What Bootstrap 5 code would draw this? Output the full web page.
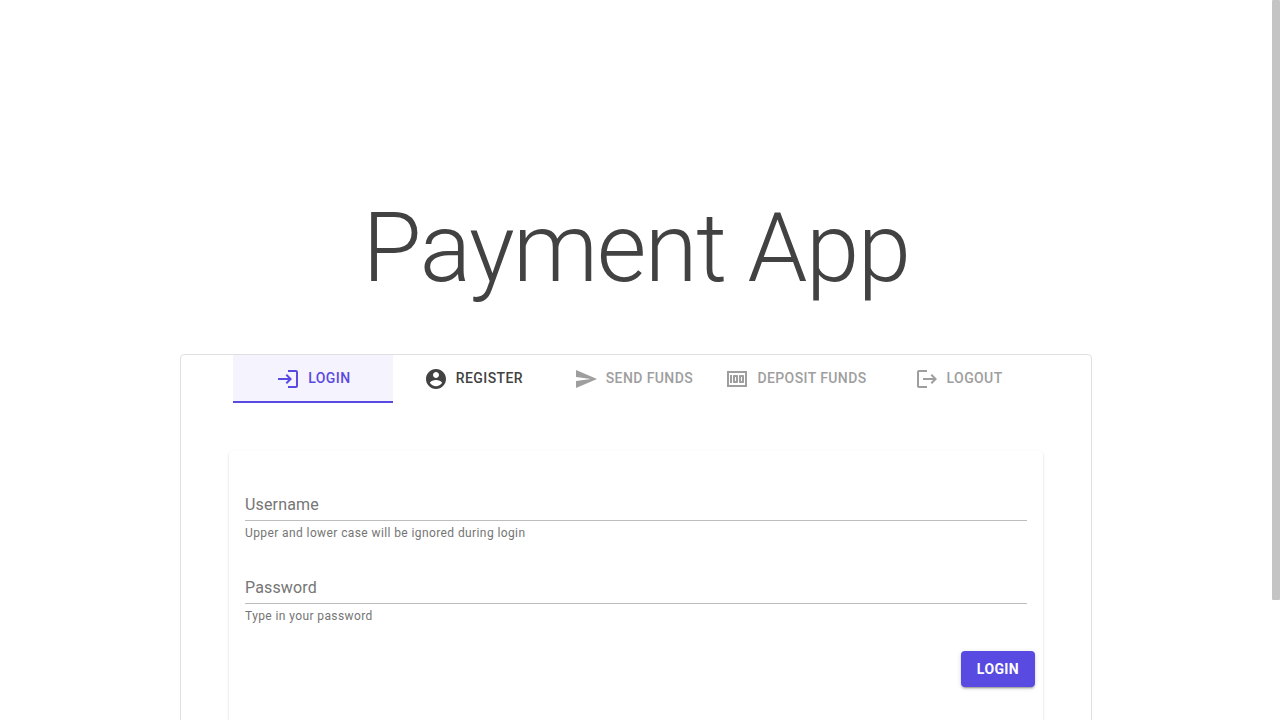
<!DOCTYPE html>
<html lang="en">
<head>
<meta charset="utf-8">
<meta name="viewport" content="width=device-width, initial-scale=1">
<title>Payment App</title>
<link href="https://cdn.jsdelivr.net/npm/bootstrap@5.3.0/dist/css/bootstrap.min.css" rel="stylesheet">
<style>
html, body { height: 100%; }
body { font-family: Roboto, sans-serif; color: #424242; overflow: hidden; }
/* thin scrollbar column at the right of the page */
.rail { width: 8px; }
.rail-thumb { height: 83.3333%; background: #c4c4c4; border-radius: 1px; }
.page-body { min-width: 0; overflow: hidden; padding-top: 192px; }
.shell { max-width: 912px; }
h1 { font-size: 96px; font-weight: 300; line-height: 112px; letter-spacing: -.01562em; margin-bottom: 50px; }
.panel { border: 1px solid #e0e0e0; border-radius: 4px; }
.tab-btn { min-width: 160px; height: 48px; border: 0; border-bottom: 2px solid transparent; background: none; padding: 0 12px; font-size: 14px; font-weight: 500; line-height: 24px; letter-spacing: .02857em; color: #424242; }
.tab-btn svg { width: 24px; height: 24px; margin-top: 2px; fill: currentColor; }
.tab-btn:disabled { color: #9e9e9e; }
.tab-btn.active { color: #594ae2; background: #f5f3fd; border-bottom-color: #594ae2; }
.form-card { border-radius: 4px; background: #fff; box-shadow: 0 2px 1px -1px rgba(0,0,0,.2), 0 1px 1px 0 rgba(0,0,0,.14), 0 1px 3px 0 rgba(0,0,0,.12); min-height: 320px; }
.fields { padding: 38px 16px 27px; }
.field { margin-bottom: 31px; }
.field label { top: 4px; left: 0; font-size: 16px; line-height: 24px; letter-spacing: .00938em; color: #757575; pointer-events: none; }
.field input { height: 32px; border: 0; border-bottom: 1px solid #bdbdbd; background: none; outline: 0; font-size: 16px; padding: 0; }
.field input:focus + label, .field input:not(:placeholder-shown) + label { top: -16px; font-size: 12px; }
.field .hint { margin-top: 4px; font-size: 12px; line-height: 16px; letter-spacing: .03333em; color: #757575; }
.btn-login { width: 74px; height: 36px; border: 0; border-radius: 4px; padding: 0; background: #594ae2; color: #fff; font-size: 14px; font-weight: 700; letter-spacing: .02857em; box-shadow: 0 3px 1px -2px rgba(0,0,0,.2), 0 2px 2px 0 rgba(0,0,0,.14), 0 1px 5px 0 rgba(0,0,0,.12); }
.btn-login:hover { background: #4a3dc4; color: #fff; }
</style>
</head>
<body class="d-flex">
<main class="page-body flex-grow-1">
  <div class="shell mx-auto">
    <h1 class="text-center">Payment App</h1>
    <section class="panel">
      <div class="d-flex justify-content-center" role="tablist">
        <button type="button" role="tab" aria-selected="true" class="tab-btn active d-flex align-items-center justify-content-center gap-2">
          <svg viewBox="0 0 24 24" aria-hidden="true"><path d="M11 7 9.600 8.400l2.600 2.600H2v2h10.200l-2.600 2.600L11 17l5-5-5-5zm9 12h-8v2h8c1.100 0 2-.9 2-2V5c0-1.100-.9-2-2-2h-8v2h8v14z"/></svg>LOGIN</button>
        <button type="button" role="tab" aria-selected="false" class="tab-btn d-flex align-items-center justify-content-center gap-2">
          <svg viewBox="0 0 24 24" aria-hidden="true"><path d="M12 2C6.480 2 2 6.480 2 12s4.480 10 10 10 10-4.480 10-10S17.520 2 12 2zm0 3c1.660 0 3 1.340 3 3s-1.340 3-3 3-3-1.340-3-3 1.340-3 3-3zm0 14.200c-2.500 0-4.710-1.280-6-3.220.03-1.990 4-3.080 6-3.080 1.990 0 5.970 1.090 6 3.080-1.290 1.940-3.500 3.220-6 3.220z"/></svg>REGISTER</button>
        <button type="button" role="tab" aria-selected="false" disabled class="tab-btn d-flex align-items-center justify-content-center gap-2">
          <svg viewBox="0 0 24 24" aria-hidden="true"><path d="M2.010 21 23 12 2.010 3 2 10l15 2-15 2z"/></svg>SEND FUNDS</button>
        <button type="button" role="tab" aria-selected="false" disabled class="tab-btn d-flex align-items-center justify-content-center gap-2">
          <svg viewBox="0 0 24 24" aria-hidden="true"><path d="M5 8h2v8H5zm7 0H9c-.55 0-1 .45-1 1v6c0 .55.45 1 1 1h3c.55 0 1-.45 1-1V9c0-.55-.45-1-1-1zm-1 6h-1v-4h1v4zm7-6h-3c-.55 0-1 .45-1 1v6c0 .55.45 1 1 1h3c.55 0 1-.45 1-1V9c0-.55-.45-1-1-1zm-1 6h-1v-4h1v4zM2 4v16h20V4H2zm2 14V6h16v12H4z"/></svg>DEPOSIT FUNDS</button>
        <button type="button" role="tab" aria-selected="false" disabled class="tab-btn d-flex align-items-center justify-content-center gap-2">
          <svg viewBox="0 0 24 24" aria-hidden="true"><path d="m17 7-1.410 1.410L18.170 11H8v2h10.170l-2.580 2.580L17 17l5-5zM4 5h8V3H4c-1.100 0-2 .9-2 2v14c0 1.100.9 2 2 2h8v-2H4V5z"/></svg>LOGOUT</button>
      </div>
      <div class="p-5">
        <form class="form-card">
          <div class="fields">
            <div class="field position-relative">
              <input id="username" class="w-100" type="text" placeholder="" autocomplete="username" aria-describedby="username-hint">
              <label for="username" class="position-absolute">Username</label>
              <div id="username-hint" class="hint">Upper and lower case will be ignored during login</div>
            </div>
            <div class="field position-relative mb-0">
              <input id="password" class="w-100" type="password" placeholder="" autocomplete="current-password" aria-describedby="password-hint">
              <label for="password" class="position-absolute">Password</label>
              <div id="password-hint" class="hint">Type in your password</div>
            </div>
          </div>
          <div class="d-flex justify-content-end px-2 pb-2">
            <button type="button" class="btn btn-login">LOGIN</button>
          </div>
        </form>
      </div>
    </section>
  </div>
</main>
<div class="rail flex-shrink-0"><div class="rail-thumb"></div></div>
<script src="https://cdn.jsdelivr.net/npm/bootstrap@5.3.0/dist/js/bootstrap.bundle.min.js"></script>
</body>
</html>
